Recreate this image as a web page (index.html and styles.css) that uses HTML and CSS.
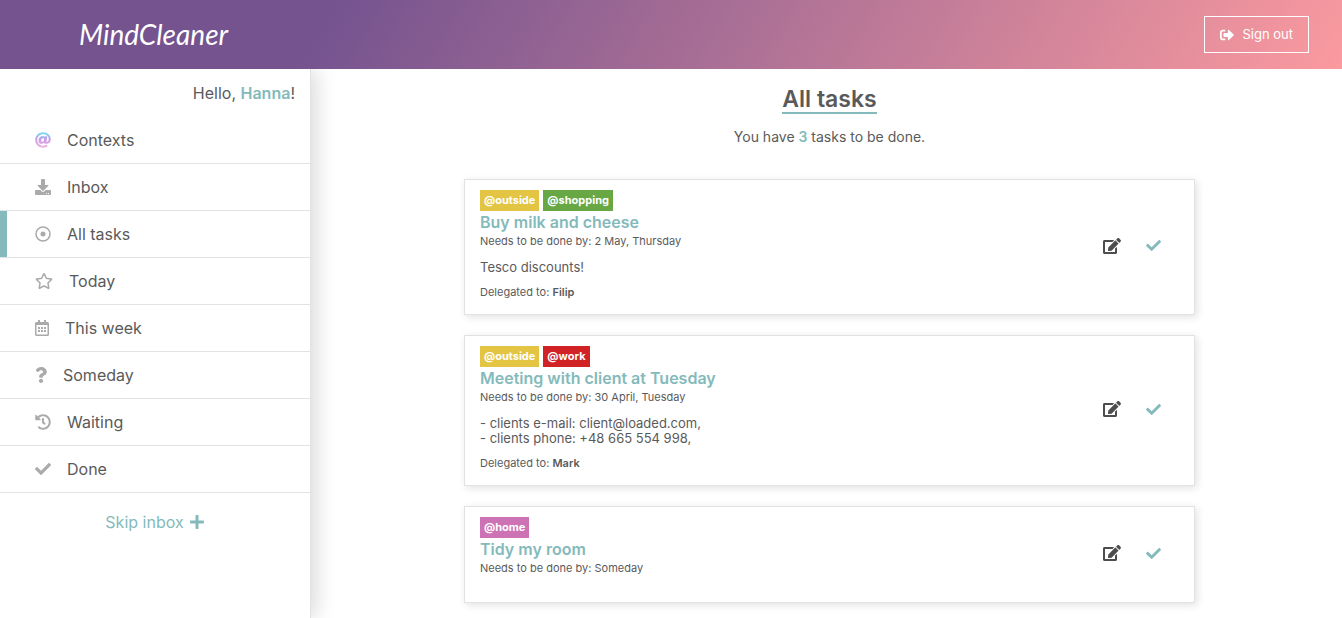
FILE: index.html
```
<!DOCTYPE html>
<html lang="en">
<head>
<meta charset="utf-8">
<title>MindCleaner - All tasks</title>
<link rel="stylesheet" href="styles.css">
</head>
<body>
<svg class="sprite" aria-hidden="true">
  <symbol id="signout" viewBox="0 0 512 512"><path d="M497 273L329 441c-15 15-41 4.500-41-17v-96H152c-13.300 0-24-10.700-24-24v-96c0-13.300 10.700-24 24-24h136V88c0-21.400 25.900-32 41-17l168 168c9.300 9.400 9.300 24.600 0 34zM192 436v-40c0-6.600-5.400-12-12-12H96c-17.700 0-32-14.300-32-32V160c0-17.700 14.300-32 32-32h84c6.600 0 12-5.400 12-12V76c0-6.600-5.400-12-12-12H96c-53 0-96 43-96 96v192c0 53 43 96 96 96h84c6.600 0 12-5.400 12-12z"/></symbol>
  <symbol id="at" viewBox="0 0 512 512">
    <linearGradient id="atfill" x1="0" y1="0" x2="0" y2="1"><stop offset="0.100" stop-color="#7cd6f5"/><stop offset="0.450" stop-color="#c79aea"/><stop offset="1" stop-color="#f0b4dc"/></linearGradient>
    <path fill="url(#atfill)" d="M256 8C118.941 8 8 118.919 8 256c0 137.059 110.919 248 248 248 48.154 0 95.342-14.140 135.408-40.223 12.005-7.815 14.625-24.288 5.552-35.372l-10.177-12.433c-7.671-9.371-21.179-11.667-31.373-5.129C325.920 429.757 291.314 440 256 440c-101.458 0-184-82.542-184-184S154.542 72 256 72c100.139 0 184 57.619 184 160 0 38.786-21.093 79.742-58.170 83.693-17.349-.454-16.910-12.857-13.476-30.024l23.433-121.110C394.653 149.750 383.308 136 368.225 136h-44.981a13.518 13.518 0 0 0-13.432 11.993l-.010.092c-14.697-17.901-40.448-21.775-59.971-21.775-74.580 0-137.831 62.234-137.831 151.460 0 65.303 36.785 105.870 96 105.870 26.984 0 57.369-15.637 74.991-38.333 9.522 34.104 40.613 34.103 70.710 34.103C462.609 379.410 504 307.798 504 232 504 95.653 394.023 8 256 8zm-21.680 304.430c-22.249 0-36.070-15.623-36.070-40.771 0-44.993 30.779-72.729 58.630-72.729 22.292 0 35.601 15.241 35.601 40.770 0 45.061-33.875 72.730-58.161 72.730z"/></symbol>
  <symbol id="download" viewBox="0 0 512 512"><path d="M216 0h80c13.300 0 24 10.700 24 24v168h87.700c17.800 0 26.700 21.500 14.100 34.100L269.700 378.300c-7.500 7.500-19.800 7.500-27.300 0L90.100 226.100c-12.600-12.600-3.700-34.100 14.100-34.100H192V24c0-13.300 10.700-24 24-24zm296 376v112c0 13.300-10.700 24-24 24H24c-13.300 0-24-10.700-24-24V376c0-13.300 10.700-24 24-24h146.700l49 49c20.100 20.100 52.500 20.100 72.600 0l49-49H488c13.300 0 24 10.700 24 24zm-124 88c0-11-9-20-20-20s-20 9-20 20 9 20 20 20 20-9 20-20zm64 0c0-11-9-20-20-20s-20 9-20 20 9 20 20 20 20-9 20-20z"/></symbol>
  <symbol id="dot" viewBox="0 0 512 512"><circle cx="256" cy="256" r="224" fill="none" stroke="currentColor" stroke-width="48"/><circle cx="256" cy="256" r="80"/></symbol>
  <symbol id="star" viewBox="0 0 576 512"><path d="M528.100 171.500L382 150.200 316.700 17.800c-11.700-23.600-45.600-23.900-57.400 0L194 150.200 47.900 171.500c-26.200 3.800-36.700 36.100-17.700 54.600l105.700 103-25 145.500c-4.500 26.300 23.200 46 46.400 33.700L288 439.600l130.700 68.700c23.200 12.200 50.900-7.400 46.400-33.700l-25-145.500 105.700-103c19-18.500 8.500-50.800-17.700-54.600zM388.600 312.300l23.700 138.400L288 385.400l-124.300 65.300 23.700-138.400-100.600-98 139-20.200 62.200-126 62.200 126 139 20.200-100.600 98z"/></symbol>
  <symbol id="calendar" viewBox="0 0 448 512"><path d="M148 288h-40c-6.600 0-12-5.400-12-12v-40c0-6.600 5.400-12 12-12h40c6.600 0 12 5.400 12 12v40c0 6.600-5.400 12-12 12zm108-12v-40c0-6.600-5.400-12-12-12h-40c-6.600 0-12 5.400-12 12v40c0 6.600 5.400 12 12 12h40c6.600 0 12-5.400 12-12zm96 0v-40c0-6.600-5.400-12-12-12h-40c-6.600 0-12 5.400-12 12v40c0 6.600 5.400 12 12 12h40c6.600 0 12-5.400 12-12zm-96 96v-40c0-6.600-5.400-12-12-12h-40c-6.600 0-12 5.400-12 12v40c0 6.600 5.400 12 12 12h40c6.600 0 12-5.400 12-12zm-96 0v-40c0-6.600-5.400-12-12-12h-40c-6.600 0-12 5.400-12 12v40c0 6.600 5.400 12 12 12h40c6.600 0 12-5.400 12-12zm192 0v-40c0-6.600-5.400-12-12-12h-40c-6.600 0-12 5.400-12 12v40c0 6.600 5.400 12 12 12h40c6.600 0 12-5.400 12-12zm96-260v352c0 26.500-21.500 48-48 48H48c-26.500 0-48-21.500-48-48V112c0-26.500 21.500-48 48-48h48V12c0-6.600 5.400-12 12-12h40c6.600 0 12 5.400 12 12v52h128V12c0-6.600 5.400-12 12-12h40c6.600 0 12 5.400 12 12v52h48c26.500 0 48 21.500 48 48zm-48 346V160H48v298c0 3.300 2.700 6 6 6h340c3.300 0 6-2.700 6-6z"/></symbol>
  <symbol id="question" viewBox="0 0 384 512"><path d="M202.021 0C122.202 0 70.503 32.703 29.914 91.026c-7.363 10.580-5.093 25.086 5.178 32.874l43.138 32.709c10.373 7.865 25.132 6.026 33.253-4.148 25.049-31.381 43.630-49.449 82.757-49.449 30.764 0 68.816 19.799 68.816 49.631 0 22.552-18.617 34.134-48.993 51.164-35.423 19.860-82.299 44.576-82.299 106.405V320c0 13.255 10.745 24 24 24h72.471c13.255 0 24-10.745 24-24v-5.773c0-42.860 125.268-44.645 125.268-160.627C377.504 66.256 286.902 0 202.021 0zM192 373.459c-38.196 0-69.271 31.075-69.271 69.271 0 38.195 31.075 69.270 69.271 69.270s69.271-31.075 69.271-69.271-31.075-69.270-69.271-69.270z"/></symbol>
  <symbol id="history" viewBox="0 0 512 512"><path d="M504 255.531c.253 136.640-111.180 248.372-247.820 248.468-59.015.042-113.223-20.530-155.822-54.911-11.077-8.940-11.905-25.541-1.839-35.607l11.267-11.267c8.609-8.609 22.353-9.551 31.891-1.984C173.062 425.135 212.781 440 256 440c101.705 0 184-82.311 184-184 0-101.705-82.311-184-184-184-48.814 0-93.149 18.969-126.068 49.932l50.754 50.754c10.080 10.080 2.941 27.314-11.313 27.314H24c-8.837 0-16-7.163-16-16V38.627c0-14.254 17.234-21.393 27.314-11.314l49.372 49.372C129.209 34.136 189.552 8 256 8c136.810 0 247.747 110.780 248 247.531zm-180.912 78.784l9.823-12.630c8.138-10.463 6.253-25.542-4.210-33.679L288 256.349V152c0-13.255-10.745-24-24-24h-16c-13.255 0-24 10.745-24 24v135.651l65.409 50.874c10.463 8.137 25.541 6.253 33.679-4.210z"/></symbol>
  <symbol id="check" viewBox="0 0 512 512"><path d="M173.898 439.404l-166.400-166.400c-9.997-9.997-9.997-26.206 0-36.204l36.203-36.204c9.997-9.998 26.207-9.998 36.204 0L192 312.690 432.095 72.596c9.997-9.997 26.207-9.997 36.204 0l36.203 36.204c9.997 9.997 9.997 26.206 0 36.204l-294.400 294.401c-9.998 9.997-26.207 9.997-36.204-.001z"/></symbol>
  <symbol id="plus" viewBox="0 0 448 512"><path d="M416 208H272V64c0-17.670-14.330-32-32-32h-32c-17.670 0-32 14.330-32 32v144H32c-17.670 0-32 14.330-32 32v32c0 17.670 14.330 32 32 32h144v144c0 17.670 14.330 32 32 32h32c17.670 0 32-14.330 32-32V304h144c17.670 0 32-14.330 32-32v-32c0-17.670-14.330-32-32-32z"/></symbol>
  <symbol id="edit" viewBox="0 0 576 512"><path d="M402.600 83.200l90.200 90.200c3.800 3.800 3.800 10 0 13.800L274.400 405.600l-92.800 10.300c-12.400 1.400-22.900-9.100-21.500-21.500l10.300-92.800L388.800 83.200c3.800-3.800 10-3.800 13.800 0zm162-22.900l-48.800-48.800c-15.200-15.200-39.900-15.200-55.200 0l-35.400 35.400c-3.800 3.800-3.800 10 0 13.800l90.200 90.200c3.800 3.800 10 3.800 13.800 0l35.400-35.400c15.200-15.300 15.200-40 0-55.200zM384 346.200V448H64V128h229.800c3.200 0 6.200-1.300 8.500-3.500l40-40c7.600-7.600 2.200-20.500-8.500-20.500H48C21.500 64 0 85.500 0 112v352c0 26.500 21.500 48 48 48h352c26.500 0 48-21.500 48-48V306.200c0-10.700-12.900-16-20.500-8.500l-40 40c-2.200 2.300-3.500 5.300-3.500 8.500z"/></symbol>
</svg>

<header class="topbar">
  <a class="logo" href="#">MindCleaner</a>
  <button class="signout" type="button"><svg class="icon-14"><use href="#signout"/></svg>Sign out</button>
</header>

<div class="layout">
  <aside class="sidebar">
    <p class="greeting">Hello, <b>Hanna</b>!</p>
    <nav class="menu">
      <a class="menu-item" href="#"><svg class="icon"><use href="#at"/></svg>Contexts</a>
      <a class="menu-item" href="#"><svg class="icon"><use href="#download"/></svg>Inbox</a>
      <a class="menu-item active" href="#" aria-current="page"><svg class="icon"><use href="#dot"/></svg>All tasks</a>
      <a class="menu-item" href="#"><svg class="icon wide"><use href="#star"/></svg>Today</a>
      <a class="menu-item" href="#"><svg class="icon narrow"><use href="#calendar"/></svg>This week</a>
      <a class="menu-item" href="#"><svg class="icon slim"><use href="#question"/></svg>Someday</a>
      <a class="menu-item" href="#"><svg class="icon"><use href="#history"/></svg>Waiting</a>
      <a class="menu-item" href="#"><svg class="icon"><use href="#check"/></svg>Done</a>
    </nav>
    <button class="skip" type="button">Skip inbox <svg class="icon"><use href="#plus"/></svg></button>
  </aside>

  <main class="content">
    <h1 class="title">All tasks</h1>
    <p class="summary">You have <b>3</b> tasks to be done.</p>

    <article class="card">
      <div class="card-body">
        <div class="tags"><span class="tag outside">@outside</span><span class="tag shopping">@shopping</span></div>
        <h2 class="task">Buy milk and cheese</h2>
        <p class="due">Needs to be done by: 2 May, Thursday</p>
        <p class="note">Tesco discounts!</p>
        <p class="delegated">Delegated to: <b>Filip</b></p>
      </div>
      <div class="actions">
        <button type="button" aria-label="Edit"><svg class="icon-edit"><use href="#edit"/></svg></button>
        <button class="finish" type="button" aria-label="Mark done"><svg class="icon-done"><use href="#check"/></svg></button>
      </div>
    </article>

    <article class="card">
      <div class="card-body">
        <div class="tags"><span class="tag outside">@outside</span><span class="tag work">@work</span></div>
        <h2 class="task">Meeting with client at Tuesday</h2>
        <p class="due">Needs to be done by: 30 April, Tuesday</p>
        <p class="note">- clients e-mail: client@loaded.com,<br>- clients phone: +48 665 554 998,</p>
        <p class="delegated">Delegated to: <b>Mark</b></p>
      </div>
      <div class="actions">
        <button type="button" aria-label="Edit"><svg class="icon-edit"><use href="#edit"/></svg></button>
        <button class="finish" type="button" aria-label="Mark done"><svg class="icon-done"><use href="#check"/></svg></button>
      </div>
    </article>

    <article class="card">
      <div class="card-body">
        <div class="tags"><span class="tag home">@home</span></div>
        <h2 class="task">Tidy my room</h2>
        <p class="due">Needs to be done by: Someday</p>
      </div>
      <div class="actions">
        <button type="button" aria-label="Edit"><svg class="icon-edit"><use href="#edit"/></svg></button>
        <button class="finish" type="button" aria-label="Mark done"><svg class="icon-done"><use href="#check"/></svg></button>
      </div>
    </article>
  </main>
</div>
</body>
</html>
```
FILE: styles.css
```
* { box-sizing: border-box; margin: 0; padding: 0; }

body {
  display: flex;
  flex-direction: column;
  min-height: 100vh;
  background: #fff;
  color: #5a5a5a;
  font-family: Inter, "Noto Sans", sans-serif;
  font-size: 16px;
}

a { color: inherit; text-decoration: none; }
button { border: 0; background: none; color: inherit; font: inherit; cursor: pointer; }
svg { display: block; flex: none; fill: currentColor; }
.sprite { position: absolute; width: 0; height: 0; }

.topbar {
  position: relative;
  z-index: 1;
  display: flex;
  align-items: center;
  justify-content: space-between;
  padding: 16px 33px 16px 79px;
  background: linear-gradient(120deg, #74538f 24%, #fb9a9f);
  color: #fff;
}
.logo {
  font-family: Lato, sans-serif;
  font-size: 28px;
  font-style: italic;
  line-height: 37px;
}
.signout {
  display: flex;
  align-items: center;
  gap: 8px;
  padding: 9px 15px;
  border: 1px solid #fff;
  font-size: 13px;
  line-height: 17px;
}
.icon-14 { width: 14px; height: 14px; }

.layout { display: flex; flex: 1; }
.sidebar {
  flex: none;
  width: 311px;
  border-right: 1px solid #e2e2e2;
  box-shadow: 5px 0 20px rgba(0, 0, 0, 0.15);
}
.greeting { padding: 14px 15px 14px 0; line-height: 20px; text-align: right; }
.greeting b, .summary b { color: #84babb; font-weight: 600; }
.menu-item {
  display: flex;
  align-items: center;
  gap: 16px;
  padding: 12px 0 12px 35px;
  border-bottom: 1px solid #e2e2e2;
  line-height: 22px;
}
.menu-item .icon { color: #aaa; }
.menu-item.active { box-shadow: inset 7px 0 #84babb; }
.icon { width: 16px; height: 16px; }
.icon.wide { width: 18px; }
.icon.narrow { width: 14px; }
.icon.slim { width: 12px; }
.skip {
  display: flex;
  align-items: center;
  gap: 5px;
  margin: 19px auto;
  color: #84babb;
  line-height: 20px;
}

.content {
  display: flex;
  flex: 1;
  flex-direction: column;
  align-items: center;
  padding: 17px 12px 14px 18px;
}
.title {
  border-bottom: 2px solid #84babb;
  font-size: 23px;
  font-weight: 600;
  line-height: 26px;
}
.summary { margin: 14px 0 34px; font-size: 14px; line-height: 17px; }

.card {
  display: flex;
  align-items: center;
  justify-content: space-between;
  width: 100%;
  max-width: 731px;
  margin-bottom: 20px;
  padding: 10px 33px 15px 15px;
  border: 1px solid #e2e2e2;
  box-shadow: 2px 2px 8px rgba(0, 0, 0, 0.12);
}
.card:last-child { margin-bottom: 0; }
.tags { display: flex; gap: 4px; }
.tag { padding: 3px 4px; color: #fff; font-size: 11px; font-weight: 700; line-height: 15px; }
.outside { background: #e3c443; }
.shopping { background: #67a744; }
.work { background: #d12325; }
.home { background: #cc72b5; }
.task { color: #84babb; font-size: 16px; font-weight: 600; line-height: 23px; }
.due { margin-bottom: 12px; font-size: 11px; line-height: 14px; }
.note { font-size: 13px; line-height: 15px; }
.delegated { margin-top: 10px; font-size: 11px; line-height: 14px; }
.delegated b { font-weight: 600; }
.actions { display: flex; align-items: center; gap: 25px; padding-top: 2px; color: #4d4d4d; }
.finish { color: #84babb; }
.icon-edit { width: 18px; height: 16px; }
.icon-done { width: 15px; height: 15px; }
```
